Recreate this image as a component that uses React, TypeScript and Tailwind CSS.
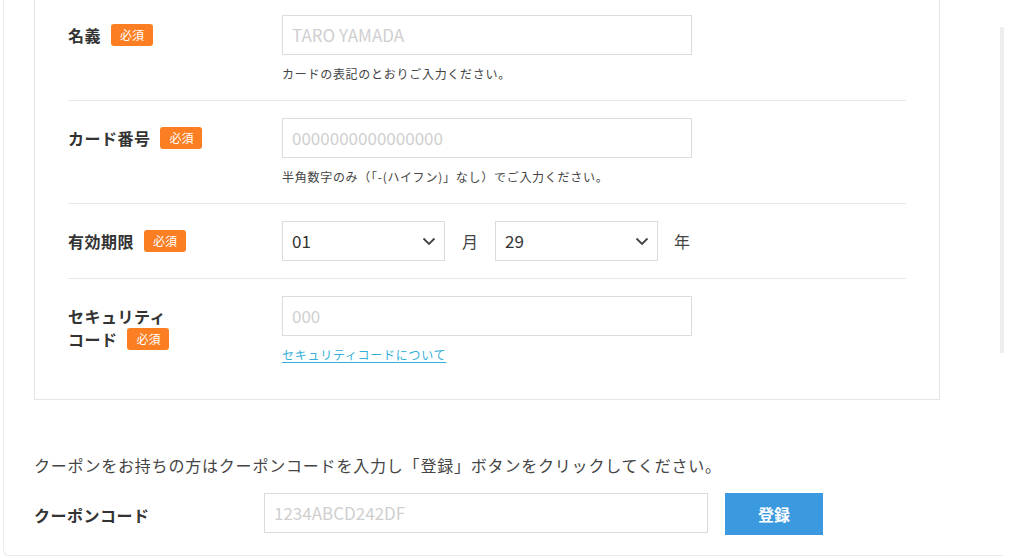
const FONT = "font-['Noto_Sans_CJK_JP','Noto_Sans',sans-serif]";

function Badge() {
  return (
    <span className="ml-[10px] inline-block h-[22px] rounded-[3px] bg-[#fb7e22] px-[9px] align-top text-[12px] leading-[22px] font-normal tracking-normal text-white">
      必須
    </span>
  );
}

function Chevron() {
  return (
    <svg width="14" height="9" viewBox="0 0 14 9" fill="none" className="shrink-0">
      <path d="M1.5 1.5 L7 7 L12.5 1.5" stroke="#444" strokeWidth="1.8" />
    </svg>
  );
}

function Row({
  label,
  children,
  last,
}: {
  label: React.ReactNode;
  children: React.ReactNode;
  last?: boolean;
}) {
  return (
    <div
      className={`flex pt-[17px] ${last ? "pb-[35px]" : "border-b border-[#e8e8e8] pb-[17px]"}`}
    >
      <div className="w-[214px] shrink-0 pt-[9px] text-[16px] leading-[23px] font-bold tracking-[0.03em] text-[#333]">
        {label}
      </div>
      <div className="flex-1">{children}</div>
    </div>
  );
}

function TextInput({ placeholder, width = "w-[410px]" }: { placeholder: string; width?: string }) {
  return (
    <div
      className={`${width} flex h-[40px] items-center border border-[#dcdcdc] bg-white px-[9px] text-[17px] text-[#cfcfcf]`}
    >
      {placeholder}
    </div>
  );
}

function Help({ children }: { children: React.ReactNode }) {
  return <p className="mt-[10px] text-[12px] leading-[18px] tracking-[0.06em] text-[#444]">{children}</p>;
}

function Select({ value }: { value: string }) {
  return (
    <div className="flex h-[40px] w-[163px] items-center justify-between border border-[#dcdcdc] bg-white pr-[8px] pl-[9px] text-[17px] text-[#333]">
      <span>{value}</span>
      <Chevron />
    </div>
  );
}

export default function App() {
  return (
    <div className={`${FONT} relative h-[558px] w-[1024px] overflow-hidden bg-white`}>
      <div className="ml-[3px] h-[558px] w-[1000px] rounded-bl-[6px] border-b border-l border-[#ececec]">
        {/* card form */}
        <div className="ml-[30px] w-[906px] border border-t-0 border-[#e5e5e5] px-[33px]">
          <div className="-mt-[2px]">
            <Row label={<>名義<Badge /></>}>
              <TextInput placeholder="TARO YAMADA" />
              <Help>カードの表記のとおりご入力ください。</Help>
            </Row>
            <Row label={<>カード番号<Badge /></>}>
              <TextInput placeholder="0000000000000000" />
              <Help>半角数字のみ（「-(ハイフン)」なし）でご入力ください。</Help>
            </Row>
            <Row label={<>有効期限<Badge /></>}>
              <div className="flex items-center text-[16px] text-[#444]">
                <Select value="01" />
                <span className="mx-[17px]">月</span>
                <Select value="29" />
                <span className="ml-[16px]">年</span>
              </div>
            </Row>
            <Row
              last
              label={
                <>
                  セキュリティ
                  <br />
                  コード<Badge />
                </>
              }
            >
              <TextInput placeholder="000" />
              <p className="mt-[10px] text-[12px] leading-[18px] tracking-[0.06em]">
                <a className="text-[#35b0d8] underline underline-offset-2">セキュリティコードについて</a>
              </p>
            </Row>
          </div>
        </div>

        {/* coupon */}
        <div className="ml-[30px] pt-[53px]">
          <p className="text-[16px] leading-[24px] tracking-[0.05em] text-[#444]">
            クーポンをお持ちの方はクーポンコードを入力し「登録」ボタンをクリックしてください。
          </p>
          <div className="mt-[16px] flex items-start">
            <div className="w-[230px] shrink-0 pt-[10px] text-[16px] leading-[24px] font-bold tracking-[0.03em] text-[#333]">
              クーポンコード
            </div>
            <TextInput placeholder="1234ABCD242DF" width="w-[444px]" />
            <button className="ml-[17px] h-[42px] w-[98px] bg-[#3b99e0] text-[16px] font-bold text-white">
              登録
            </button>
          </div>
        </div>
      </div>

      {/* scroll track on the right */}
      <div className="absolute top-[27px] left-[1000px] h-[326px] w-[4px] bg-[#eeeeee]" />
    </div>
  );
}
